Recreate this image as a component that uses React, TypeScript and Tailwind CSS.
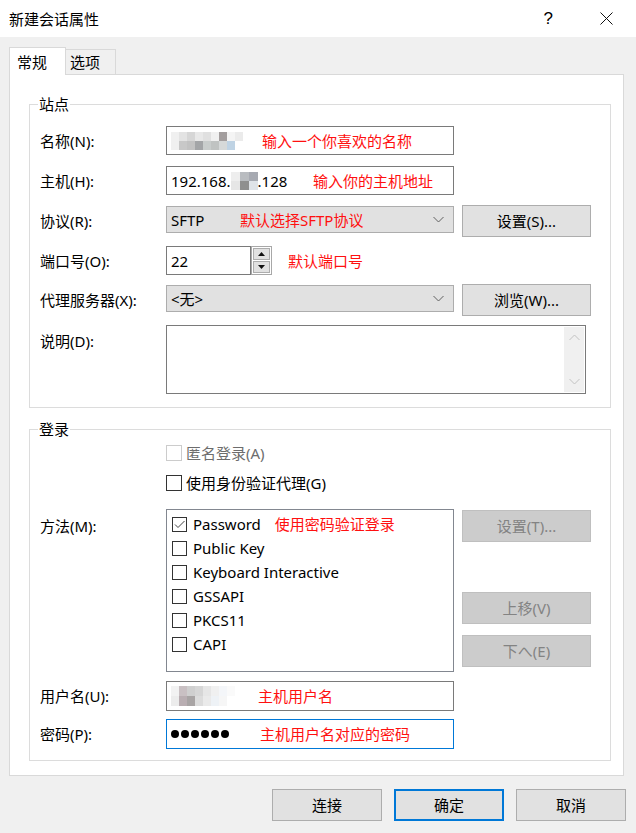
import type { ReactNode } from "react";
import clsx from "clsx";

const red = "absolute top-1/2 -translate-y-1/2 whitespace-nowrap text-[#ff1010]";

function Btn({ children, disabled, primary, className }: { children: ReactNode; disabled?: boolean; primary?: boolean; className?: string }) {
  return (
    <button
      type="button"
      className={clsx(
        "flex items-center justify-center",
        disabled ? "bg-[#cccccc] border border-[#bfbfbf] text-[#838383]" : "bg-[#e1e1e1] text-black",
        !disabled && (primary ? "border-2 border-[#0078d7]" : "border border-[#adadad]"),
        className
      )}
    >
      {children}
    </button>
  );
}

function Check({ checked, disabled, size = 16 }: { checked?: boolean; disabled?: boolean; size?: number }) {
  return (
    <span
      className={clsx(
        "flex shrink-0 items-center justify-center bg-white border",
        disabled ? "border-[#cccccc]" : "border-[#333333]",
        size === 16 ? "w-[16px] h-[16px]" : "w-[15px] h-[15px]"
      )}
    >
      {checked && (
        <svg width="13" height="13" viewBox="0 0 13 13">
          <polyline points="2,6.5 5,9.5 11.5,3" fill="none" stroke="#444" strokeWidth="1" />
        </svg>
      )}
    </span>
  );
}

function Chevron() {
  return (
    <svg width="11" height="7" viewBox="0 0 11 7" className="absolute right-[9px] top-1/2 -translate-y-1/2">
      <polyline points="0.5,0.5 5.5,5.5 10.5,0.5" fill="none" stroke="#606060" strokeWidth="1" />
    </svg>
  );
}

// pixelated blur, as in the screenshot
function Blur({ rows, w = 8, h = 9 }: { rows: string[][]; w?: number; h?: number }) {
  return (
    <span className="flex flex-col">
      {rows.map((r, i) => (
        <span key={i} className="flex">
          {r.map((c, j) => (
            <span key={j} style={{ background: c, width: w, height: h }} />
          ))}
        </span>
      ))}
    </span>
  );
}

function Row({ label, children, className }: { label: string; children: ReactNode; className?: string }) {
  return (
    <div className={clsx("flex", className)}>
      <div className="w-[126px] shrink-0 flex items-center">{label}</div>
      {children}
    </div>
  );
}

function Group({ title, children, className }: { title: string; children: ReactNode; className?: string }) {
  return (
    <div className={clsx("relative w-[582px] border border-[#dcdcdc] pl-[10px] flex flex-col", className)}>
      <span className="absolute left-[8px] -top-[11px] bg-white px-[1px] leading-[20px]">{title}</span>
      {children}
    </div>
  );
}

const input = "relative w-[288px] h-[29px] bg-white border border-[#7a7a7a] flex items-center pl-[4px]";

export default function App() {
  return (
    <div className="w-[636px] h-[833px] bg-[#f0f0f0] flex flex-col text-[15px] leading-[20px] text-black font-['Noto_Sans','Noto_Sans_CJK_SC',sans-serif]">
      {/* title bar */}
      <div className="h-[37px] shrink-0 bg-white flex items-center pl-[9px] pr-[23px]">
        <span className="font-['Noto_Sans_CJK_SC',sans-serif]">新建会话属性</span>
        <span className="ml-auto text-[17px] font-['Liberation_Sans',sans-serif]">?</span>
        <svg width="13" height="13" viewBox="0 0 13 13" className="ml-[47px]">
          <path d="M0.5 0.5 L12.5 12.5 M12.5 0.5 L0.5 12.5" stroke="#111" strokeWidth="1" />
        </svg>
      </div>

      <div className="pl-[9px] pt-[10px]">
        {/* tabs */}
        <div className="flex items-end h-[27px]">
          <div className="relative z-10 -mb-px h-[28px] w-[57px] bg-white border-x border-t border-[#d9d9d9] flex items-center pl-[7px]">常规</div>
          <div className="h-[25px] w-[50px] border-t border-r border-[#d9d9d9] flex items-center pl-[4px]">选项</div>
        </div>

        {/* panel */}
        <div className="w-[615px] h-[702px] bg-white border border-[#d9d9d9] pl-[19px] pt-[29px]">
          <Group title="站点" className="h-[304px]">
            <Row label="名称(N):" className="mt-[21px] h-[29px]">
              <div className={input}>
                <Blur
                  rows={[
                    ["#f0f0f0", "#e3e3e3", "#d6d6d6", "#e8e8e8", "#e0e0e0", "#f0f0f0", "#a39e9e", "#f4f4f4", "#ebebeb"],
                    ["#f0f0f0", "#c8c8c8", "#c2c2c2", "#a3a5a7", "#c9cdcc", "#c0c3c2", "#d6d9d9", "#bfd3e4", "#ffffff"],
                  ]}
                />
                <span className={clsx(red, "left-[95px]")}>输入一个你喜欢的名称</span>
              </div>
            </Row>
            <Row label="主机(H):" className="mt-[11px] h-[29px]">
              <div className={input}>
                <span>192.168.</span>
                <Blur
                  w={9}
                  rows={[
                    ["#eeeeee", "#b9bcc0", "#a7aab2"],
                    ["#e6e6e6", "#8f8f8f", "#dfe3e8"],
                  ]}
                />
                <span>.128</span>
                <span className={clsx(red, "left-[146px]")}>输入你的主机地址</span>
              </div>
            </Row>
            <Row label="协议(R):" className="mt-[10px] h-[32px]">
              <div className="relative mt-[1px] w-[288px] h-[27px] bg-[#e1e1e1] border border-[#adadad] flex items-center pl-[4px]">
                <span>SFTP</span>
                <span className={clsx(red, "left-[73px]")}>默认选择SFTP协议</span>
                <Chevron />
              </div>
              <Btn className="ml-[8px] w-[129px] h-[32px]">设置(S)...</Btn>
            </Row>
            <Row label="端口号(O):" className="mt-[9px] h-[29px]">
              <div className="w-[85px] h-[29px] bg-white border border-[#7a7a7a] flex items-center pl-[4px]">22</div>
              <div className="w-[21px] h-[29px] border border-[#a8a8a8] bg-white p-[1px] flex flex-col gap-[1px]">
                <div className="flex-1 bg-[#e1e1e1] border border-[#adadad] flex items-center justify-center">
                  <svg width="7" height="4" viewBox="0 0 7 4"><polygon points="3.5,0 7,4 0,4" fill="#111" /></svg>
                </div>
                <div className="flex-1 bg-[#e1e1e1] border border-[#adadad] flex items-center justify-center">
                  <svg width="7" height="4" viewBox="0 0 7 4"><polygon points="0,0 7,0 3.5,4" fill="#111" /></svg>
                </div>
              </div>
              <span className="ml-[16px] self-center text-[#ff1010]">默认端口号</span>
            </Row>
            <Row label="代理服务器(X):" className="mt-[9px] h-[32px]">
              <div className="relative mt-[1px] w-[288px] h-[27px] bg-[#e1e1e1] border border-[#adadad] flex items-center pl-[4px]">
                <span>&lt;无&gt;</span>
                <Chevron />
              </div>
              <Btn className="ml-[8px] w-[129px] h-[32px]">浏览(W)...</Btn>
            </Row>
            <div className="mt-[9px] flex h-[69px]">
              <div className="w-[126px] shrink-0 pt-[6px]">说明(D):</div>
              <div className="w-[420px] h-[69px] bg-white border border-[#7a7a7a] flex justify-end p-[1px]">
                <div className="w-[20px] bg-[#f0f0f0] flex flex-col justify-between items-center py-[7px]">
                  <svg width="11" height="7" viewBox="0 0 11 7"><polyline points="0.5,6 5.5,1 10.5,6" fill="none" stroke="#c2c2c2" /></svg>
                  <svg width="11" height="7" viewBox="0 0 11 7"><polyline points="0.5,1 5.5,6 10.5,1" fill="none" stroke="#c2c2c2" /></svg>
                </div>
              </div>
            </div>
          </Group>

          <Group title="登录" className="mt-[21px] h-[332px]">
            <div className="mt-[15px] ml-[126px] h-[16px] flex items-center gap-[4px] text-[#6d6d6d]">
              <Check disabled />
              <span>匿名登录(A)</span>
            </div>
            <div className="mt-[14px] ml-[126px] h-[16px] flex items-center gap-[4px]">
              <Check />
              <span>使用身份验证代理(G)</span>
            </div>
            <div className="mt-[18px] flex h-[163px]">
              <div className="w-[126px] shrink-0 pt-[7px]">方法(M):</div>
              <div className="w-[288px] h-[163px] border border-[#828790] bg-white pt-[2px] pl-[5px]">
                {["Password", "Public Key", "Keyboard Interactive", "GSSAPI", "PKCS11", "CAPI"].map((m, i) => (
                  <div key={m} className="h-[24px] flex items-center gap-[6px]">
                    <Check checked={i === 0} size={15} />
                    <span>{m}</span>
                    {i === 0 && <span className="ml-[8px] text-[#ff1010]">使用密码验证登录</span>}
                  </div>
                ))}
              </div>
              <div className="ml-[8px] flex flex-col">
                <Btn disabled className="mt-[1px] w-[129px] h-[32px]">设置(T)...</Btn>
                <Btn disabled className="mt-[50px] w-[129px] h-[32px]">上移(V)</Btn>
                <Btn disabled className="mt-[11px] w-[129px] h-[32px]">下へ(E)</Btn>
              </div>
            </div>
            <Row label="用户名(U):" className="mt-[9px] h-[30px]">
              <div className={clsx(input, "h-[30px]")}>
                <Blur
                  w={8}
                  h={10}
                  rows={[
                    ["#f2f2f2", "#c9c0c3", "#cfcfcf", "#d6d6d6", "#e6e6e6", "#f0f0f0", "#f4f6f9", "#fafafa"],
                    ["#ececec", "#b9aeb2", "#a8a4a4", "#dcdcdc", "#eaeaea", "#eef2f6", "#f6f6f6", "#ffffff"],
                  ]}
                />
                <span className={clsx(red, "left-[91px]")}>主机用户名</span>
              </div>
            </Row>
            <Row label="密码(P):" className="mt-[8px] h-[30px]">
              <div className="relative w-[288px] h-[30px] bg-white border border-[#0078d7] flex items-center pl-[4px] gap-[2px]">
                {[0, 1, 2, 3, 4, 5].map((d) => (
                  <span key={d} className="w-[8px] h-[8px] rounded-full bg-black" />
                ))}
                <span className={clsx(red, "left-[93px]")}>主机用户名对应的密码</span>
              </div>
            </Row>
          </Group>
        </div>
      </div>

      {/* footer buttons */}
      <div className="mt-[13px] flex justify-end gap-[12px] pr-[10px]">
        <Btn className="w-[110px] h-[32px]">连接</Btn>
        <Btn primary className="w-[110px] h-[32px]">确定</Btn>
        <Btn className="w-[110px] h-[32px]">取消</Btn>
      </div>
    </div>
  );
}
